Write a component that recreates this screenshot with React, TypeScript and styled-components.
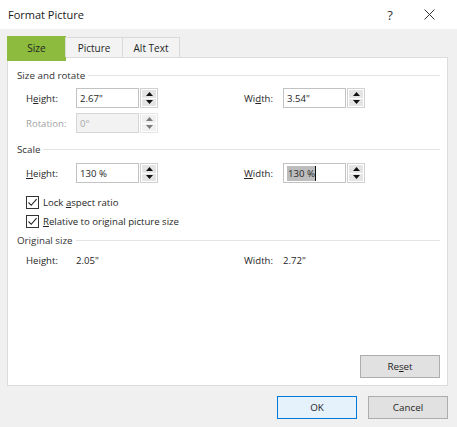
import React from "react";
import styled, { createGlobalStyle } from "styled-components";

const Global = createGlobalStyle`
  html, body { margin: 0; padding: 0; background: #ffffff; }
  body { font-family: "Open Sans", "Noto Sans", sans-serif; color: #222; }
  * { box-sizing: border-box; }
`;

const Window = styled.div`
  width: 457px;
  height: 427px;
  display: flex;
  flex-direction: column;
  background: #f0f0f0;
  overflow: hidden;
`;

const TitleBar = styled.div`
  height: 29px;
  background: #ffffff;
  display: flex;
  align-items: center;
  padding-left: 8px;
  font-size: 11px;
  color: #1a1a1a;
`;

const Title = styled.span`
  flex: 1;
`;

const TitleButton = styled.div<{ w: number }>`
  width: ${(p) => p.w}px;
  height: 29px;
  display: flex;
  align-items: center;
  justify-content: center;
  font-size: 13px;
  color: #333;
`;

const Body = styled.div`
  flex: 1;
  display: flex;
  flex-direction: column;
  padding: 7px 9px 0 7px;
`;

const TabRow = styled.div`
  display: flex;
  align-items: flex-end;
  height: 21px;
  position: relative;
  z-index: 1;
`;

const Tab = styled.div<{ active?: boolean; w: number }>`
  width: ${(p) => p.w}px;
  height: ${(p) => (p.active ? 25 : 20)}px;
  margin-bottom: ${(p) => (p.active ? -4 : 0)}px;
  display: flex;
  align-items: center;
  justify-content: center;
  font-size: 10px;
  color: #1f1f1f;
  background: ${(p) => (p.active ? "#8cbb3d" : "#f3f3f3")};
  border: 1px solid ${(p) => (p.active ? "#8cbb3d" : "#d9d9d9")};
  border-bottom: none;
  margin-left: ${(p) => (p.active ? 0 : -1)}px;
  padding-bottom: ${(p) => (p.active ? 3 : 0)}px;
`;

const Panel = styled.div`
  height: 329px;
  background: #ffffff;
  border: 1px solid #dcdcdc;
  padding: 10px 7px 7px 9px;
  display: flex;
  flex-direction: column;
  font-size: 9.6px;
`;

const Section = styled.div<{ mt: number }>`
  height: 14px;
  margin-top: ${(p) => p.mt}px;
  display: flex;
  align-items: center;
  gap: 3px;
  color: #333;
  font-size: 9.8px;
  &::after {
    content: "";
    flex: 1;
    height: 1px;
    background: #e3e3e3;
  }
`;

const Row = styled.div<{ mt: number; h?: number }>`
  margin-top: ${(p) => p.mt}px;
  height: ${(p) => p.h ?? 20}px;
  display: flex;
  align-items: center;
  padding-left: 9px;
`;

const Label = styled.span<{ w: number; disabled?: boolean }>`
  width: ${(p) => p.w}px;
  color: ${(p) => (p.disabled ? "#a3a3a3" : "#262626")};
`;

const Text = styled.span`
  color: #262626;
  white-space: pre;
`;

const Group = styled.div<{ w?: number }>`
  display: flex;
  align-items: center;
  width: ${(p) => (p.w ? `${p.w}px` : "auto")};
`;

const Field = styled.div<{ disabled?: boolean }>`
  width: 63px;
  height: 20px;
  border: 1px solid ${(p) => (p.disabled ? "#d6d6d6" : "#c2c2c2")};
  background: ${(p) => (p.disabled ? "#f2f2f2" : "#ffffff")};
  color: ${(p) => (p.disabled ? "#a8a8a8" : "#262626")};
  display: flex;
  align-items: center;
  padding-left: 3px;
`;

const Selected = styled.span`
  background: #bdbdbd;
  padding: 1px 0 1px 1px;
  border-right: 1px solid #111;
`;

const Spin = styled.div<{ disabled?: boolean }>`
  width: 18px;
  height: 20px;
  margin-left: 1px;
  border: 1px solid #d0d0d0;
  display: flex;
  flex-direction: column;
  background: #ffffff;
  padding: 1px;
  gap: 1px;
  opacity: ${(p) => (p.disabled ? 0.55 : 1)};
`;

const SpinHalf = styled.div`
  flex: 1;
  background: #e4e4e4;
  display: flex;
  align-items: center;
  justify-content: center;
`;

const Check = styled.div`
  width: 13px;
  height: 13px;
  border: 1px solid #333;
  background: #fff;
  display: flex;
  align-items: center;
  justify-content: center;
  margin-right: 4px;
`;

const U = styled.span`
  text-decoration: underline;
  text-underline-offset: 1px;
`;

const Spacer = styled.div`
  flex: 1;
`;

const ButtonRow = styled.div<{ pr: number }>`
  display: flex;
  justify-content: flex-end;
  gap: 11px;
  padding-right: ${(p) => p.pr}px;
`;

const Button = styled.div<{ primary?: boolean }>`
  width: 80px;
  height: 23px;
  display: flex;
  align-items: center;
  justify-content: center;
  font-size: 9.8px;
  color: #1f1f1f;
  background: ${(p) => (p.primary ? "#e5f1fb" : "#e1e1e1")};
  border: 1px solid ${(p) => (p.primary ? "#0078d7" : "#adadad")};
`;

const Footer = styled.div`
  height: 40px;
  padding-top: 10px;
`;

const Up = () => (
  <svg width="7" height="4" viewBox="0 0 7 4">
    <path d="M0 4 L3.5 0 L7 4 Z" fill="#111" />
  </svg>
);
const Down = () => (
  <svg width="7" height="4" viewBox="0 0 7 4">
    <path d="M0 0 L3.5 4 L7 0 Z" fill="#111" />
  </svg>
);

const Spinner = ({ disabled }: { disabled?: boolean }) => (
  <Spin disabled={disabled}>
    <SpinHalf>
      <Up />
    </SpinHalf>
    <SpinHalf>
      <Down />
    </SpinHalf>
  </Spin>
);

const CheckMark = () => (
  <svg width="11" height="11" viewBox="0 0 11 11">
    <path d="M1.5 5.5 L4.2 8.3 L9.6 2.2" fill="none" stroke="#222" strokeWidth="1.1" />
  </svg>
);

export default function App() {
  return (
    <Window>
      <Global />
      <TitleBar>
        <Title>Format Picture</Title>
        <TitleButton w={46}>?</TitleButton>
        <TitleButton w={32}>
          <svg width="11" height="11" viewBox="0 0 11 11">
            <path d="M0.5 0.5 L10.5 10.5 M10.5 0.5 L0.5 10.5" stroke="#333" strokeWidth="1" />
          </svg>
        </TitleButton>
        <TitleButton w={12} />
      </TitleBar>
      <Body>
        <TabRow>
          <Tab active w={59}>Size</Tab>
          <Tab w={58}>Picture</Tab>
          <Tab w={58}>Alt Text</Tab>
        </TabRow>
        <Panel>
          <Section mt={0}>Size and rotate</Section>
          <Row mt={6}>
            <Group w={218}>
              <Label w={50}>
                H<U>e</U>ight:
              </Label>
              <Field>2.67"</Field>
              <Spinner />
            </Group>
            <Group>
              <Label w={39}>
                Wi<U>d</U>th:
              </Label>
              <Field>3.54"</Field>
              <Spinner />
            </Group>
          </Row>
          <Row mt={5}>
            <Group w={218}>
              <Label w={50} disabled>
                Rotation:
              </Label>
              <Field disabled>0°</Field>
              <Spinner disabled />
            </Group>
          </Row>
          <Section mt={9}>Scale</Section>
          <Row mt={7}>
            <Group w={218}>
              <Label w={50}>
                <U>H</U>eight:
              </Label>
              <Field>130 %</Field>
              <Spinner />
            </Group>
            <Group>
              <Label w={39}>
                <U>W</U>idth:
              </Label>
              <Field>
                <Selected>130 %</Selected>
              </Field>
              <Spinner />
            </Group>
          </Row>
          <Row mt={12} h={14}>
            <Check>
              <CheckMark />
            </Check>
            <Text>
              {"Lock "}
              <U>a</U>
              {"spect ratio"}
            </Text>
          </Row>
          <Row mt={5} h={14}>
            <Check>
              <CheckMark />
            </Check>
            <Text>
              <U>R</U>
              {"elative to original picture size"}
            </Text>
          </Row>
          <Section mt={5}>Original size</Section>
          <Row mt={6} h={14}>
            <Group w={218}>
              <Label w={50}>Height:</Label>
              <Text>2.05"</Text>
            </Group>
            <Group>
              <Label w={39}>Width:</Label>
              <Text>2.72"</Text>
            </Group>
          </Row>
          <Spacer />
          <ButtonRow pr={0}>
            <Button>
              Re<U>s</U>et
            </Button>
          </ButtonRow>
        </Panel>
        <Footer>
          <ButtonRow pr={-1}>
            <Button primary>OK</Button>
            <Button>Cancel</Button>
          </ButtonRow>
        </Footer>
      </Body>
    </Window>
  );
}
